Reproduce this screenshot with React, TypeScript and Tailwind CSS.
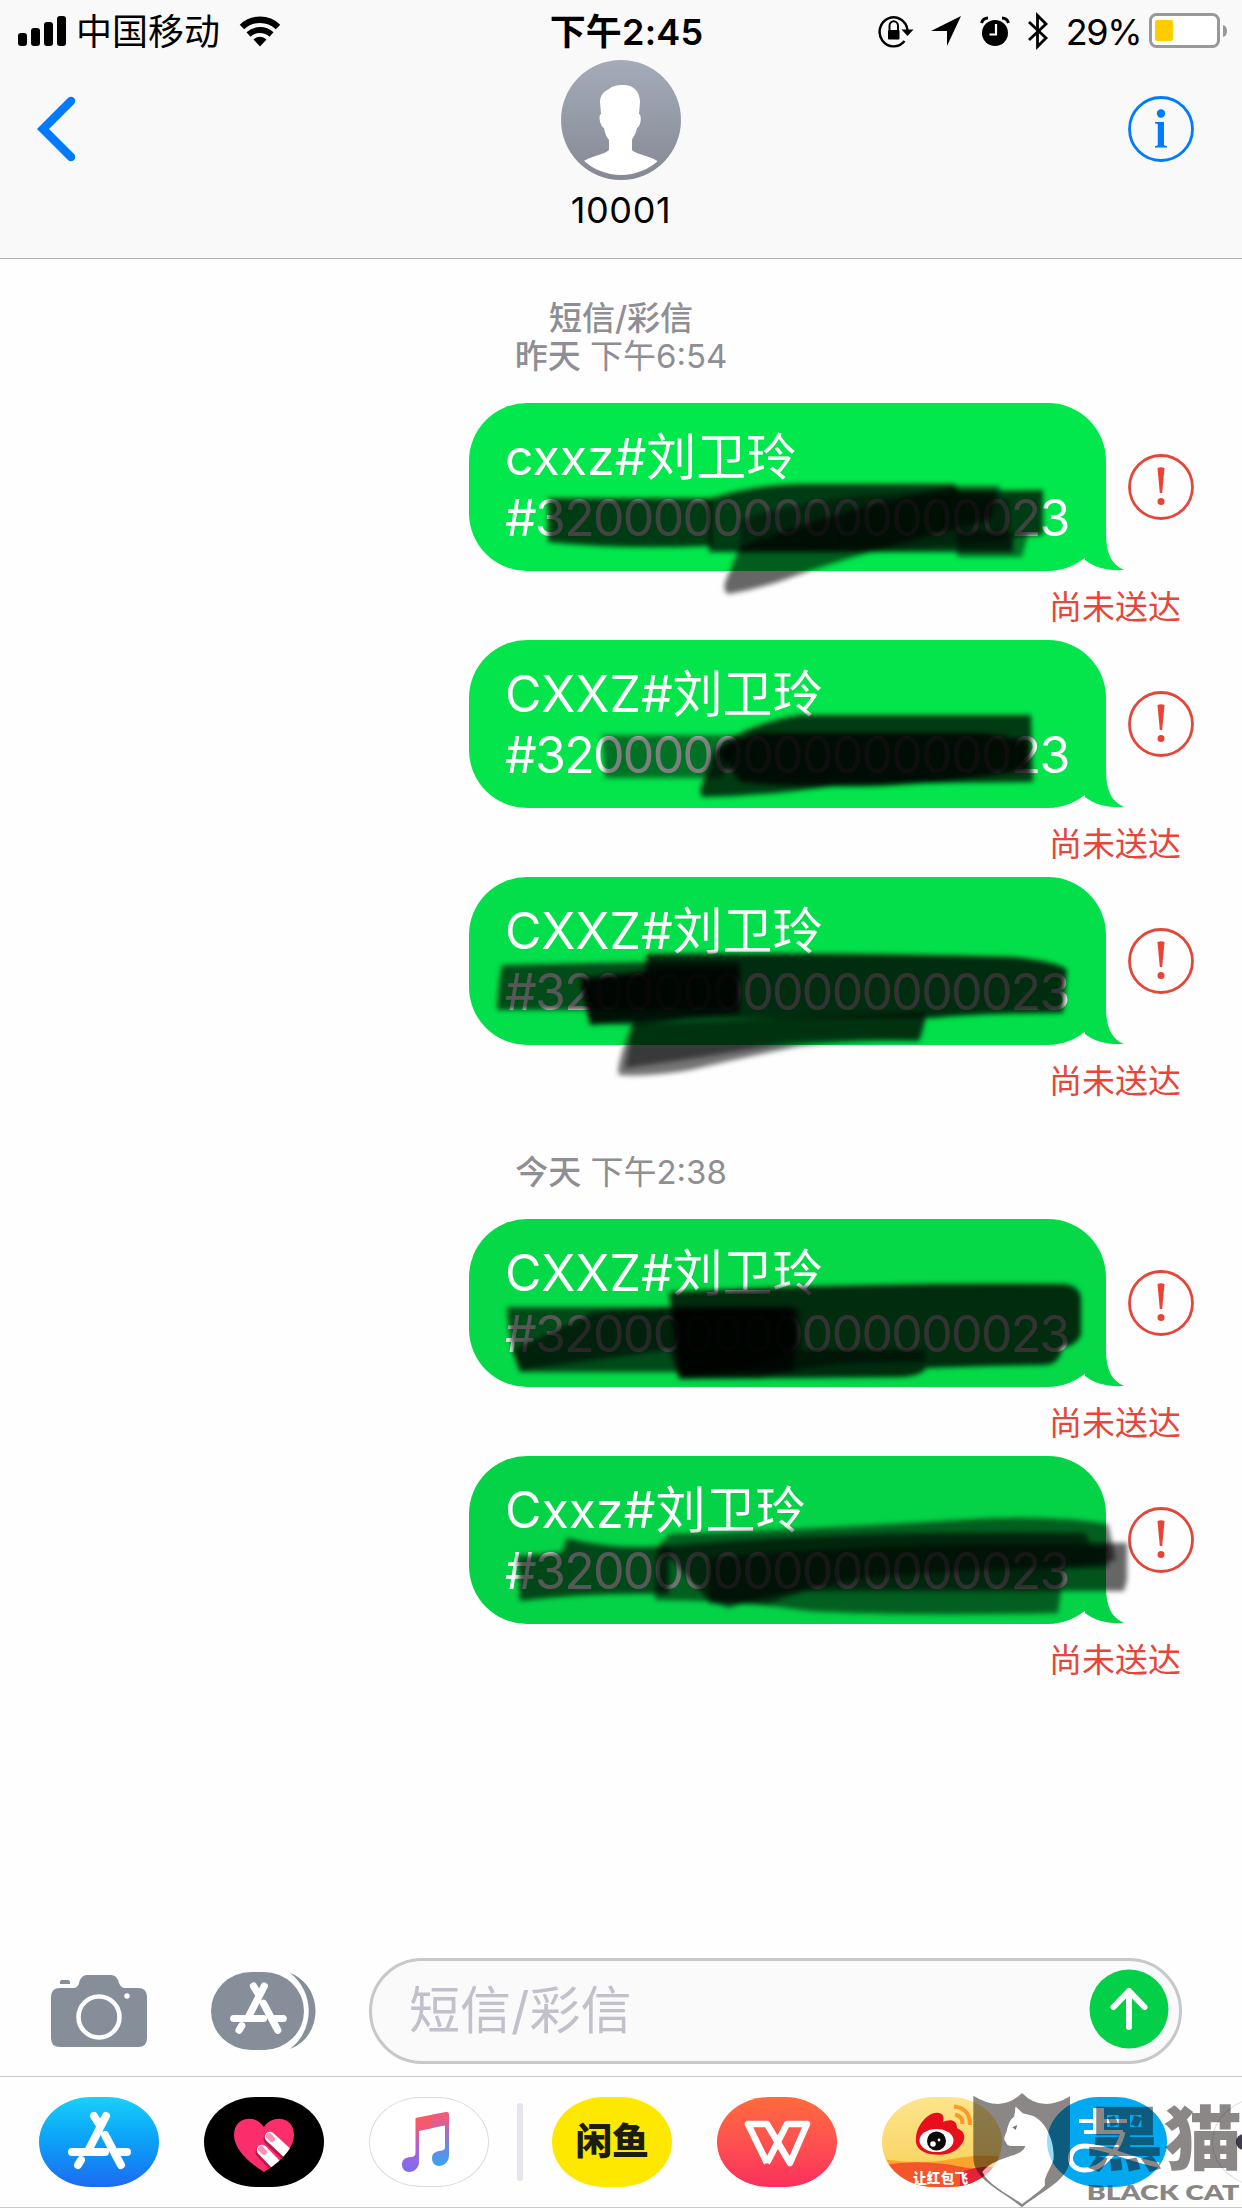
import React from 'react';

interface Message {
    id: number;
    name: string;
    color: string;
    fill: string;
}

// Private digits of the ID number are masked with zeros.
const MASKED_ID = '#320000000000000023';

const yesterday: Message[] = [
    { id: 1, name: 'cxxz#刘卫玲', color: 'bg-[#00e84b]', fill: 'fill-[#00e84b]' },
    { id: 2, name: 'CXXZ#刘卫玲', color: 'bg-[#03e54b]', fill: 'fill-[#03e54b]' },
    { id: 3, name: 'CXXZ#刘卫玲', color: 'bg-[#03df4a]', fill: 'fill-[#03df4a]' },
];

const today: Message[] = [
    { id: 4, name: 'CXXZ#刘卫玲', color: 'bg-[#05d948]', fill: 'fill-[#05d948]' },
    { id: 5, name: 'Cxxz#刘卫玲', color: 'bg-[#05d347]', fill: 'fill-[#05d347]' },
];

const scribbles: { d: string; opacity: number }[] = [
    { d: 'M548 498 H712 V546 Q620 550 548 542 Z', opacity: 0.74 },
    { d: 'M709 499 Q750 485 800 484 L954 484 L959 491 L1043 490 V535 L1013 537 V552 H709 Z', opacity: 0.74 },
    { d: 'M728 594 Q722 590 726 580 L740 547 Q840 508 954 486 H1000 L990 520 Q870 550 800 574 Q765 588 728 594 Z', opacity: 0.6 },
    { d: 'M740 520 Q830 490 950 492 L1010 500 V540 Q880 552 800 552 H740 Z', opacity: 0.4 },
    { d: 'M957 530 L1028 534 L1022 557 H957 Z', opacity: 0.5 },
    { d: 'M602 735 H740 L722 778 H605 Z', opacity: 0.5 },
    { d: 'M715 750 Q740 726 799 715 H1031 L1033 782 Q900 783 839 785 Q770 796 702 797 L700 790 Z', opacity: 0.74 },
    { d: 'M719 752 Q730 740 759 733 H985 L1028 740 V770 Q950 782 884 786 Q800 788 740 782 Z', opacity: 0.78 },
    { d: 'M502 965 L640 962 H740 V1010 H497 Q498 985 502 965 Z', opacity: 0.66 },
    { d: 'M647 954 Q860 952 1014 957 Q1060 962 1067 970 L1063 1013 Q980 1013 934 1018 H739 Q660 1017 590 1025 L580 980 L645 972 Z', opacity: 0.8 },
    { d: 'M632 1024 L926 1012 Q924 1030 919 1041 Q860 1040 800 1046 Q740 1058 690 1070 Q650 1077 619 1075 Q615 1068 632 1024 Z', opacity: 0.55 },
    { d: 'M635 1018 H926 L919 1041 Q860 1038 790 1042 Q700 1058 625 1068 Z', opacity: 0.5 },
    { d: 'M580 978 Q660 966 739 970 V1014 Q690 1018 640 1025 L590 1024 Z', opacity: 0.6 },
    { d: 'M507 1307 H794 V1372 H520 Q508 1340 507 1307 Z', opacity: 0.66 },
    { d: 'M669 1292 Q860 1282 1062 1284 Q1081 1285 1081 1300 V1335 Q1076 1346 1062 1348 Q1060 1364 1045 1365 Q980 1366 926 1368 Q922 1376 900 1377 L679 1379 Z', opacity: 0.8 },
    { d: 'M595 1312 Q700 1304 794 1307 L800 1345 Q760 1372 700 1376 L679 1378 L669 1350 L520 1370 L512 1350 Z', opacity: 0.55 },
    { d: 'M675 1310 H800 V1350 H925 V1362 Q820 1360 760 1378 H680 Z', opacity: 0.5 },
    { d: 'M517 1556 L562 1552 L567 1538 Q610 1550 669 1546 V1594 Q590 1592 520 1601 Z', opacity: 0.66 },
    { d: 'M657 1547 L670 1534 Q800 1530 959 1520 Q1048 1514 1108 1524 L1116 1560 Q1095 1566 1064 1568 L1058 1613 Q900 1616 809 1611 Q740 1600 655 1600 Z', opacity: 0.55 },
    { d: 'M660 1547 Q830 1530 1085 1533 L1090 1543 H1127 V1580 L1124 1591 H809 Q760 1596 729 1608 L709 1601 Z', opacity: 0.6 },
    { d: 'M709 1558 Q900 1540 1108 1545 V1568 Q950 1568 850 1580 Q800 1590 770 1604 H709 Z', opacity: 0.5 },
];

const Scribbles: React.FC = () => (
    <svg className="absolute left-0 top-0 pointer-events-none" width="1242" height="2208" viewBox="0 0 1242 2208">
        <g className="blur-[2.5px]">
            {scribbles.map((s, i) => (
                <path key={i} d={s.d} fill="#000" fillOpacity={s.opacity} />
            ))}
        </g>
    </svg>
);

const StatusBar: React.FC = () => (
    <div className="h-15 grid grid-cols-[1fr_auto_1fr] items-center text-[36px] leading-[60px]">
        <div className="flex items-center pl-[18px]">
            <svg width="49" height="31" viewBox="0 0 49 31">
                <rect x="0" y="17" width="9" height="13" rx="3" />
                <rect x="13" y="12" width="9" height="18" rx="3" />
                <rect x="26" y="6" width="9" height="24" rx="3" />
                <rect x="39" y="0" width="9" height="30" rx="3" />
            </svg>
            <span className="ml-[9px] pt-0.5">中国移动</span>
            <svg className="ml-[19px]" width="42" height="31" viewBox="0 0 42 31">
                <path d="M3 11 A26 26 0 0 1 39 11" fill="none" stroke="#000" strokeWidth="6.500" />
                <path d="M9.500 18.500 A17 17 0 0 1 32.500 18.500" fill="none" stroke="#000" strokeWidth="6" />
                <path d="M14.500 23.500 A9 9 0 0 1 27.500 23.500 L21 30.500 Z" />
            </svg>
        </div>
        <span className="pl-[11px] pt-0.5 font-semibold tracking-[0.200px]">下午2:45</span>
        <div className="flex items-center justify-end pr-3.5">
            <svg width="36" height="38" viewBox="0 0 36 38">
                <path d="M26.500 29 A14 14.500 0 1 1 29.500 18" fill="none" stroke="#000" strokeWidth="2.400" />
                <path d="M23.500 17.500 H35.500 L29.500 24 Z" />
                <rect x="10" y="18" width="11.500" height="9.500" rx="1" />
                <path d="M11.500 18 V14 A4 4.500 0 0 1 20 14 V18" fill="none" stroke="#000" strokeWidth="2" />
            </svg>
            <svg className="ml-[17px]" width="30" height="31" viewBox="0 0 30 31">
                <path d="M30 0 L16 30 V15 H0 Z" />
            </svg>
            <svg className="ml-[19px]" width="30" height="31" viewBox="0 0 30 31">
                <circle cx="15" cy="17" r="13" />
                <path d="M1.500 7 Q3 2 8 2 M28.500 7 Q27 2 22 2" fill="none" stroke="#000" strokeWidth="3" />
                <path d="M16 8 V18.500 H9.500" fill="none" stroke="#fff" strokeWidth="2.200" />
            </svg>
            <svg className="ml-[17px]" width="22" height="38" viewBox="0 0 22 38">
                <path d="M2 10 L19 26 L10.500 34.500 V3.500 L19 12 L2 28" fill="none" stroke="#000" strokeWidth="2.800" />
            </svg>
            <span className="ml-[17px] pt-0.5 tracking-[-1.500px]">29%</span>
            <svg className="ml-2" width="79" height="36" viewBox="0 0 79 36">
                <rect x="1.500" y="1.500" width="68" height="32" rx="6" fill="#fff" stroke="#989898" strokeWidth="3" />
                <rect x="6" y="7" width="18" height="21" rx="2" fill="#ffcc00" />
                <path d="M74 12 Q78 13 78 18 Q78 23 74 24 Z" fill="#989898" />
            </svg>
        </div>
    </div>
);

const Header: React.FC = () => (
    <header className="h-[259px] bg-[#f9f9f9] border-b border-[#b2b2b2]">
        <StatusBar />
        <div className="grid grid-cols-[1fr_auto_1fr]">
            <svg className="ml-9 mt-9" width="42" height="66" viewBox="0 0 42 66">
                <path d="M35 5 L7 33 L35 61" fill="none" stroke="#007aff" strokeWidth="8.500" strokeLinecap="round" />
            </svg>
            <div className="flex flex-col items-center">
                <svg width="120" height="120" viewBox="0 0 120 120">
                    <defs>
                        <linearGradient id="avatar" x1="0" y1="0" x2="0" y2="1">
                            <stop offset="0" stopColor="#a4abb9" />
                            <stop offset="1" stopColor="#858994" />
                        </linearGradient>
                        <clipPath id="avatarClip"><circle cx="60" cy="60" r="55" /></clipPath>
                    </defs>
                    <circle cx="60" cy="60" r="60" fill="url(#avatar)" />
                    <path
                        clipPath="url(#avatarClip)"
                        fill="#fff"
                        d="M60 25 C71 24 79 30 79 42 L78 54 C81 55 80 66 76 68 C75 74 72 77 71 80 V90 C76 95 92 96 99 103 V120 H20 V103 C28 96 43 95 48 90 V80 C45 77 44 73 43 68 C39 66 37 55 40 54 L39 42 C39 33 46 30 48 29 C51 26 56 25 60 25 Z"
                    />
                </svg>
                <span className="text-[36px] leading-[60px] tracking-[0.600px]">10001</span>
            </div>
            <div className="flex justify-end pr-12 pt-9">
                <svg width="66" height="66" viewBox="0 0 66 66" fill="#007aff">
                    <circle cx="33" cy="33" r="31.500" fill="none" stroke="#007aff" strokeWidth="2.800" />
                    <circle cx="33" cy="17.500" r="4.200" />
                    <path d="M27 26 H36 V49 Q36.500 50 39 50 V51.500 H27 V50 Q29.500 50 29.800 49 V28.500 Q29.500 27.500 27 27.500 Z" />
                </svg>
            </div>
        </div>
    </header>
);

const MessageRow: React.FC<{ message: Message }> = ({ message }) => (
    <div className="pr-12">
        <div className="flex items-center justify-end gap-[22px]">
            <div className={`relative w-[637px] h-[168px] rounded-[58px] pl-9 pt-6 text-white text-[50px] leading-[61px] whitespace-nowrap ${message.color}`}>
                <svg className={`absolute right-[-18px] bottom-0 ${message.fill}`} width="60" height="62" viewBox="0 0 60 62">
                    <path d="M18 0 H42 V25 C42 45 48 56 60 61 C42 62 30 58 21 51 Z" />
                </svg>
                <p>{message.name}</p>
                <p className="tracking-[-1.700px]">{MASKED_ID}</p>
            </div>
            <svg width="66" height="66" viewBox="0 0 66 66" fill="#ea4335">
                <circle cx="33" cy="33" r="31.500" fill="none" stroke="#e2473a" strokeWidth="2.800" />
                <path d="M29.500 14 Q33 12.500 36.500 14 L34.200 39 H31.800 Z" />
                <circle cx="33" cy="47.500" r="3.500" />
            </svg>
        </div>
        <p className="mt-[18px] mb-[15px] pr-[13px] text-right text-[33px] leading-9 text-[#e8453a]">尚未送达</p>
    </div>
);

const StoreGlyph: React.FC = () => (
    <path d="M67 19 L49 54 M55 19 L60 27 M66 38 L82 68 M33 55 H66 M79 55 H88 M42 63 L39 68" fill="none" stroke="#fff" strokeWidth="8" strokeLinecap="round" />
);

const Composer: React.FC = () => (
    <div className="flex items-center h-[118px] pb-3">
        <svg className="ml-[51px]" width="97" height="73" viewBox="0 0 97 73">
            <path fill="#868e9a" d="M9 13 H22 Q27 13 28 8 Q30 0 36 0 H60 Q66 0 68 8 Q70 13 74 13 H87 Q96 13 96 22 V63 Q96 72 87 72 H9 Q0 72 0 63 V22 Q0 13 9 13 Z" />
            <path fill="#868e9a" d="M9 9 V7 Q9 5 11 5 H17 Q19 5 19 7 V9 Z" />
            <circle cx="48" cy="42" r="20.500" fill="none" stroke="#fff" strokeWidth="4.500" />
            <circle cx="76" cy="21" r="2.700" fill="#fff" />
        </svg>
        <svg className="ml-[63px]" width="106" height="78" viewBox="0 0 106 78">
            <rect width="93" height="78" rx="40" fill="#868e9a" />
            <path d="M79 1 C113 14 113 64 79 77 C104 58 104 20 79 1 Z" fill="#868e9a" />
            <g transform="translate(-7 -3) scale(.9)"><StoreGlyph /></g>
        </svg>
        <div className="ml-[52px] w-[813px] h-[106px] rounded-full border-3 border-[#c7c7cc] bg-[#fafafa] flex items-center justify-between pl-[37px] pr-[10px]">
            <span className="text-[51px] leading-[60px] text-[#c1c1cb]">短信/彩信</span>
            <svg className="-mt-1" width="80" height="80" viewBox="0 0 80 80">
                <circle cx="40" cy="40" r="39.500" fill="#04cf48" />
                <path d="M40 58 V22 M24.500 38 L40 22 L55.500 38" fill="none" stroke="#fff" strokeWidth="6" strokeLinecap="round" strokeLinejoin="round" />
            </svg>
        </div>
    </div>
);

const AppIcon: React.FC<{ className: string; children?: React.ReactNode }> = ({ className, children }) => (
    <div className={`w-[120px] h-[90px] shrink-0 overflow-hidden rounded-[52px/45px] flex items-center justify-center ${className}`}>
        {children}
    </div>
);

const AppDrawer: React.FC = () => (
    <div className="h-[132px] border-y border-[#c9c9cc] pl-[39px] pt-5 flex gap-[45px] overflow-hidden">
        <AppIcon className="bg-linear-to-b from-[#1ad0fa] to-[#1d6af2]">
            <svg width="120" height="90" viewBox="0 0 120 90"><StoreGlyph /></svg>
        </AppIcon>
        <AppIcon className="bg-black">
            <svg width="120" height="90" viewBox="0 0 120 90">
                <defs>
                    <clipPath id="heart">
                        <path d="M60 75 C50 69 30 54 30 38 C30 19 52 17 60 30 C68 17 90 19 90 38 C90 54 70 69 60 75 Z" />
                    </clipPath>
                </defs>
                <g clipPath="url(#heart)">
                    <rect width="120" height="90" fill="#fc2d6b" />
                    <path d="M66 42 L94 68 M58 55 L84 82" stroke="#b8174a" strokeWidth="13" strokeLinecap="round" />
                    <path d="M66 40 L94 66 M58 53 L84 80" stroke="#fff" strokeWidth="10.500" strokeLinecap="round" />
                    <path d="M65 39 L68 42 M57 52 L60 55" stroke="#ff8fb4" strokeWidth="6" strokeLinecap="round" />
                </g>
            </svg>
        </AppIcon>
        <AppIcon className="bg-white border border-[#dcdcdf]">
            <svg className="shrink-0" width="120" height="90" viewBox="0 0 120 90">
                <defs>
                    <linearGradient id="noteLeft" gradientUnits="userSpaceOnUse" x1="0" y1="15" x2="0" y2="74">
                        <stop offset="0.200" stopColor="#fa5769" />
                        <stop offset="0.600" stopColor="#b360cf" />
                        <stop offset="1" stopColor="#7b6df5" />
                    </linearGradient>
                    <linearGradient id="noteRight" gradientUnits="userSpaceOnUse" x1="0" y1="15" x2="0" y2="70">
                        <stop offset="0.100" stopColor="#f2587c" />
                        <stop offset="0.550" stopColor="#7d7fe0" />
                        <stop offset="1" stopColor="#34a7ee" />
                    </linearGradient>
                </defs>
                <path fill="url(#noteLeft)" d="M46.500 21 L64 17.500 V31 L50 34 V65 C50 71 45 75 40 75 C35 75 33 71 33 67 C33 61 39 60 43 60 Q46.500 59 46.500 56 Z" />
                <path fill="url(#noteRight)" d="M63.500 17.600 L77 15 Q80 14.500 80 18 V58 C80 65 75 69 70 69 C65 69 63 65 63 61 C63 55 69 54 73 53.500 Q76 53 76 50 V28.500 L63.500 31.100 Z" />
            </svg>
        </AppIcon>
        <div className="mx-[-17px] mt-1.5 w-1.5 h-[78px] rounded-full bg-[#e5e5ee] shrink-0" />
        <AppIcon className="ml-px bg-[#fee800] text-[37px] leading-[90px] font-black text-[#1c1c10] tracking-[-0.500px]">闲鱼</AppIcon>
        <AppIcon className="bg-linear-to-b from-[#ff6a3c] to-[#fb2e5c]">
            <svg width="120" height="90" viewBox="0 0 120 90">
                <path d="M50 66 L31 27 H50 L73 66 L90 27 H70 L50 66" fill="none" stroke="#fff" strokeWidth="6.500" strokeLinejoin="round" />
            </svg>
        </AppIcon>
        <AppIcon className="bg-linear-to-b from-[#fde58c] to-[#f9cf55]">
            <svg width="120" height="90" viewBox="0 0 120 90">
                <path d="M0 62 Q40 68 70 62 T120 60 V90 H0 Z" fill="#f9a72c" />
                <path d="M0 68 Q40 62 75 69 T120 72 V90 H0 Z" fill="#f5552a" />
                <path d="M78 76 Q100 66 120 72 V90 H78 Z" fill="#e8203a" />
                <path d="M34 42 C34 28 47 14 57 16 C62 17 62 21 61 25 C67 22 75 22 75 31 C84 35 84 42 79 48 C72 58 58 59 48 57 C38 55 33 49 34 42 Z" fill="#e60f1b" />
                <ellipse cx="54.500" cy="43.500" rx="17" ry="11.500" fill="#fff" />
                <circle cx="54.500" cy="44" r="9.500" fill="#0a0a0a" />
                <circle cx="51" cy="47" r="2.800" fill="#fff" />
                <circle cx="57" cy="43" r="1.400" fill="#fff" />
                <path d="M72 9.500 Q88 11 88 28 M73 17.500 Q81 19 80.500 27" fill="none" stroke="#fa9a28" strokeWidth="4" />
                <text x="31" y="86" textLength="55" className="text-[13.500px] font-black" fill="#fff">让红包飞</text>
            </svg>
        </AppIcon>
        <AppIcon className="bg-[#02a9f1]">
            <svg width="120" height="90" viewBox="0 0 120 90">
                <path d="M32 24 H80 M37 35 H76" fill="none" stroke="#fff" strokeWidth="4" />
                <path d="M46 11 H57 V36 H46 Z" fill="#fff" />
                <path d="M76 35 C72 52 56 73 38 73 C18 73 19 49 38 49 C58 49 80 62 112 68" fill="none" stroke="#fff" strokeWidth="5" />
            </svg>
        </AppIcon>
        <AppIcon className="bg-white border border-[#dcdcdf] justify-start pl-[23px]">
            <div className="size-4 rounded-full bg-[#3d3b4c]" />
        </AppIcon>
    </div>
);

const Watermark: React.FC = () => (
    <svg className="absolute left-[860px] top-[2070px] pointer-events-none" width="382" height="138" viewBox="0 0 1146 414">
        <g fill="#170f0f" fillOpacity="0.500">
            <path
                fillRule="evenodd"
                d="M340 77 Q425 130 486 69 Q545 130 630 79 V262 C630 330 550 360 486 412 C422 360 340 330 340 262 Z M467 110 L463 140 C448 150 445 165 440 185 Q428 205 437 215 Q442 228 455 228 H496 C490 252 455 255 425 268 C400 278 378 290 367 306 C385 345 450 375 486 402 C515 380 545 360 555 345 C548 325 570 300 580 270 C586 220 560 155 518 138 Q495 132 488 130 Z"
            />
            <text x="676" y="284" textLength="470" lengthAdjust="spacingAndGlyphs" className="text-[212px] font-black">黑猫</text>
            <text x="680" y="389" textLength="458" lengthAdjust="spacingAndGlyphs" className="text-[64px] font-extrabold font-['Lato']">BLACK CAT</text>
        </g>
        <path d="M467 110 L463 140 C448 150 445 165 440 185 Q428 205 437 215 Q442 228 455 228 H496 C490 252 455 255 425 268 C400 278 378 290 367 306 C385 345 450 375 486 402 C515 380 545 360 555 345 C548 325 570 300 580 270 C586 220 560 155 518 138 Q495 132 488 130 Z" fill="#fff" fillOpacity="0.600" />
        <path d="M457 172 L472 165 L467 180 Z" fill="#777" />
    </svg>
);

const App: React.FC = () => {
    return (
        <div className="relative w-[1242px] h-[2208px] overflow-hidden flex flex-col bg-[#fefefe] text-black font-[Inter,'Noto_Sans_CJK_SC',sans-serif]">
            <Header />
            <main className="flex-1 min-h-0">
                <div className="pt-10 mb-7 text-center text-[33px] leading-[38px] text-[#8e8e93]">
                    <p className="font-medium">短信/彩信</p>
                    <p><span className="font-medium">昨天</span> 下午6:54</p>
                </div>
                {yesterday.map((m) => <MessageRow key={m.id} message={m} />)}
                <p className="mt-[54px] mb-7 text-center text-[33px] leading-[38px] text-[#8e8e93]">
                    <span className="font-medium">今天</span> 下午2:38
                </p>
                {today.map((m) => <MessageRow key={m.id} message={m} />)}
            </main>
            <Composer />
            <AppDrawer />
            <Scribbles />
            <Watermark />
        </div>
    );
};

export default App;
